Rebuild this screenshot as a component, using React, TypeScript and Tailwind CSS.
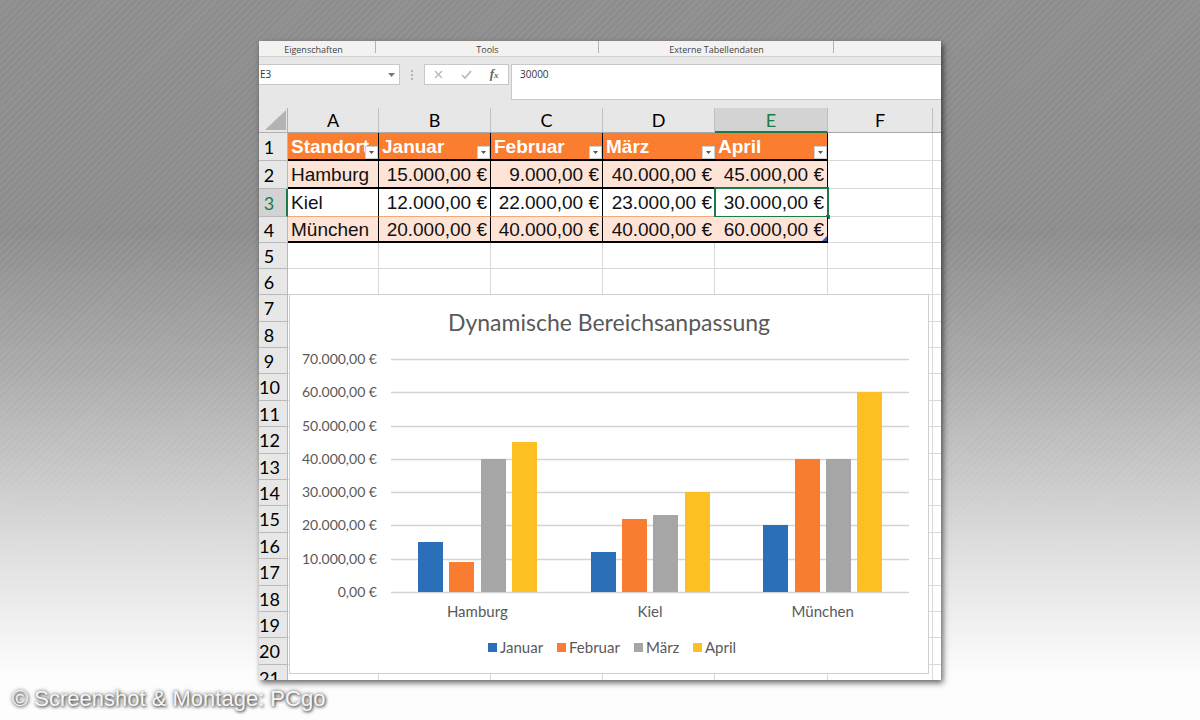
import type { ReactNode } from 'react';

const columns = [
  { name: 'A', header: 'Standort' },
  { name: 'B', header: 'Januar' },
  { name: 'C', header: 'Februar' },
  { name: 'D', header: 'März' },
  { name: 'E', header: 'April' },
  { name: 'F', header: '' },
];

const locations = [
  { name: 'Hamburg', values: [15000, 9000, 40000, 45000] },
  { name: 'Kiel', values: [12000, 22000, 23000, 30000] },
  { name: 'München', values: [20000, 40000, 40000, 60000] },
];

const series = [
  { name: 'Januar', color: '#2a6fb8', legendX: 199 },
  { name: 'Februar', color: '#f97d31', legendX: 268 },
  { name: 'März', color: '#a6a6a6', legendX: 345 },
  { name: 'April', color: '#fdc023', legendX: 404 },
];

const emptyRows = Array.from({ length: 17 }, (_, i) => i + 5);

function formatEuro(value: number) {
  const whole = String(value).replace(/\B(?=(\d{3})+$)/g, '.');
  return `${whole},00 €`;
}

function Ribbon() {
  return (
    <div className="flex h-4 border-b border-[#d2d0ce] bg-[#f4f2f1] text-[9px] leading-[17px] text-[#444444]">
      <div className="relative w-[117px] shrink-0 pr-2 text-center">
        Eigenschaften
        <span className="absolute right-0 top-0 h-3 w-px bg-[#b5b3b1]" />
      </div>
      <div className="relative w-[223px] shrink-0 text-center">
        Tools
        <span className="absolute right-0 top-0 h-3 w-px bg-[#b5b3b1]" />
      </div>
      <div className="relative w-[235px] shrink-0 text-center">
        Externe Tabellendaten
        <span className="absolute right-0 top-0 h-3 w-px bg-[#b5b3b1]" />
      </div>
    </div>
  );
}

function FormulaBar() {
  return (
    <div className="flex items-start pb-2 pt-[7px] text-[10px] text-[#333333]">
      <div className="flex h-[21px] w-[141px] shrink-0 items-center border border-l-0 border-[#c8c8c8] bg-white">
        <input
          aria-label="Namenfeld"
          defaultValue="E3"
          className="min-w-0 flex-1 bg-transparent pl-px outline-none"
        />
        <button aria-label="Namenfeld öffnen" className="flex h-full w-4 items-center justify-center">
          <svg width="7" height="4" viewBox="0 0 7 4">
            <path d="M0 0h7L3.5 4z" fill="#777777" />
          </svg>
        </button>
      </div>
      <div className="flex h-[21px] w-6 shrink-0 items-center justify-center">
        <svg width="2" height="10" viewBox="0 0 2 10" fill="#b4b4b4">
          <path d="M0 0h2v2H0zM0 4h2v2H0zM0 8h2v2H0z" />
        </svg>
      </div>
      <div className="flex h-[21px] w-[85px] shrink-0 items-center border border-[#c8c8c8] bg-white">
        <button aria-label="Abbrechen" className="flex h-full flex-1 items-center justify-center">
          <svg width="9" height="9" viewBox="0 0 9 9" fill="none" stroke="#b8b8b8" strokeWidth="1.4">
            <path d="M1 1l7 7M8 1L1 8" />
          </svg>
        </button>
        <button aria-label="Eingeben" className="flex h-full flex-1 items-center justify-center">
          <svg width="11" height="9" viewBox="0 0 11 9" fill="none" stroke="#b8b8b8" strokeWidth="1.7">
            <path d="M1 5l3 3L10 1" />
          </svg>
        </button>
        <button
          aria-label="Funktion einfügen"
          className="h-full flex-1 font-['Liberation_Serif',serif] text-[13px] font-bold italic leading-4 text-[#666666]"
        >
          f<span className="text-[9px]">x</span>
        </button>
      </div>
      <textarea
        aria-label="Bearbeitungsleiste"
        defaultValue="30000"
        className="ml-0.5 block h-9 min-w-0 flex-1 resize-none border border-r-0 border-[#c8c8c8] bg-white px-2 pt-0.5 leading-[14px] outline-none"
      />
    </div>
  );
}

function RowHeader({ children, active }: { children: ReactNode; active?: boolean }) {
  return (
    <th
      scope="row"
      className={`border-b border-b-[#b9b9b9] p-0 text-center font-['Lato',sans-serif] text-[18px] font-normal leading-5 ${
        active
          ? 'border-r-2 border-r-[#1b7a48] bg-[#d3d3d3] pr-[7px] text-[#1b7a48]'
          : 'border-r border-r-[#b9b9b9] bg-[#e7e7e7] pr-2 text-black'
      }`}
    >
      {children}
    </th>
  );
}

function EmptyCells({ count }: { count: number }) {
  return (
    <>
      {Array.from({ length: count }, (_, i) => (
        <td key={i} className="border-b border-r border-[#d8d8d8] p-0 last:border-r-0" />
      ))}
    </>
  );
}

// D has no divider of its own towards the April column
const verticalLine = ['border-r border-r-black', 'border-r border-r-black', 'border-r border-r-black', '', 'border-r border-r-black'];

const rowStyle = [
  'bg-[#fde4d6] border-b-2 border-b-black pt-px',
  'bg-white border-b border-b-[#f4a77a]',
  'bg-[#fde4d6] border-b-2 border-b-black pt-px',
];

const rowHeight = ['h-7', 'h-7', 'h-[26px]'];

function Sheet() {
  return (
    <table className="w-full table-fixed border-separate border-spacing-0 bg-white">
      <colgroup>
        <col className="w-[29px]" />
        <col className="w-[91px]" />
        <col className="w-[112px]" />
        <col className="w-[112px]" />
        <col className="w-[112px]" />
        <col className="w-[113px]" />
        <col className="w-[105px]" />
        <col />
      </colgroup>
      <thead>
        <tr className="h-[25px]">
          <th className="border-b border-r border-[#b0b0b0] bg-[#e7e7e7] p-0">
            <svg className="ml-1.5" width="21" height="20" viewBox="0 0 21 20">
              <path d="M21 0v20H0z" fill="#b3b3b3" />
            </svg>
          </th>
          {columns.map((col) => (
            <th
              key={col.name}
              scope="col"
              className={`p-0 font-['Lato',sans-serif] text-[18px] font-normal leading-5 ${
                col.name === 'E'
                  ? 'border-b-2 border-r border-b-[#1b7a48] border-r-[#c0c0c0] bg-[#d3d3d3] text-[#1b7a48]'
                  : 'border-b border-r border-b-[#a8a8a8] border-r-[#c0c0c0] bg-[#e7e7e7] text-black'
              }`}
            >
              {col.name}
            </th>
          ))}
          <th className="border-b border-[#a8a8a8] bg-[#e7e7e7] p-0" />
        </tr>
      </thead>
      <tbody className="font-['Liberation_Sans',sans-serif] text-[19px] leading-5 text-[#111111]">
        <tr className="h-7">
          <RowHeader>1</RowHeader>
          {columns.slice(0, 5).map((col, i) => (
            <td
              key={col.name}
              className={`relative border-b-2 border-b-black bg-[#fb7d2f] p-0 pl-[3px] pt-px font-bold text-white ${verticalLine[i]}`}
            >
              {col.header}
              <button
                aria-label={`${col.header} filtern`}
                className="absolute bottom-0 right-0 flex h-[13px] w-[13px] items-center justify-center border border-[#d0d0d0] bg-white"
              >
                <svg width="5" height="3" viewBox="0 0 5 3">
                  <path d="M0 0h5L2.5 3z" fill="#555555" />
                </svg>
              </button>
            </td>
          ))}
          <EmptyCells count={2} />
        </tr>
        {locations.map((location, row) => (
          <tr key={location.name} className={rowHeight[row]}>
            <RowHeader active={row === 1}>{row + 2}</RowHeader>
            <td className={`p-0 pl-[3px] ${rowStyle[row]} ${verticalLine[0]}`}>{location.name}</td>
            {location.values.map((value, i) => (
              <td
                key={i}
                className={`relative whitespace-nowrap p-0 pr-[3px] text-right ${rowStyle[row]} ${verticalLine[i + 1]}`}
              >
                {formatEuro(value)}
                {row === 1 && i === 3 && (
                  <span className="pointer-events-none absolute -bottom-0.5 -left-px -right-0.5 -top-0.5 border-2 border-[#1b7a48]">
                    <span className="absolute -bottom-[3px] -right-[3px] h-1 w-1 bg-[#1b7a48]" />
                  </span>
                )}
                {row === 2 && i === 3 && (
                  <svg className="absolute bottom-0 right-0" width="5" height="5" viewBox="0 0 5 5">
                    <path d="M5 0v5H0z" fill="#3c5ba9" />
                  </svg>
                )}
              </td>
            ))}
            <EmptyCells count={2} />
          </tr>
        ))}
        {emptyRows.map((n) => (
          <tr key={n} className={[0, 2].includes(n % 5) && n > 5 ? 'h-[27px]' : 'h-[26px]'}>
            <RowHeader>{n}</RowHeader>
            <EmptyCells count={7} />
          </tr>
        ))}
      </tbody>
    </table>
  );
}

const plot = { left: 101, right: 619, bottom: 298, height: 233, max: 70000 };
const groupWidth = (plot.right - plot.left) / locations.length;

function Chart() {
  const ticks = [0, 10000, 20000, 30000, 40000, 50000, 60000, 70000];
  const y = (value: number) => Math.round(plot.bottom - (value / plot.max) * plot.height);

  return (
    <svg viewBox="0 0 638 378" className="block w-full font-['Lato',sans-serif]" fill="#595959">
      <text x="319" y="36" fontSize="23" textAnchor="middle">
        Dynamische Bereichsanpassung
      </text>
      {ticks.map((tick) => (
        <g key={tick}>
          <path d={`M${plot.left} ${y(tick) - 0.5}H${plot.right}`} stroke="#d4d4d4" strokeWidth="1.5" />
          <text x="87" y={y(tick) + 4} fontSize="14" textAnchor="end">
            {formatEuro(tick)}
          </text>
        </g>
      ))}
      {locations.map((location, g) => (
        <g key={location.name}>
          {location.values.map((value, i) => (
            <rect
              key={i}
              x={Math.round(plot.left + g * groupWidth + 27 + i * 31.3)}
              y={y(value) - 1}
              width="25"
              height={plot.bottom - y(value)}
              fill={series[i].color}
            />
          ))}
          <text x={plot.left + (g + 0.5) * groupWidth} y="322" fontSize="15" textAnchor="middle">
            {location.name}
          </text>
        </g>
      ))}
      {series.map((s) => (
        <g key={s.name}>
          <rect x={s.legendX - 1} y="348" width="9" height="9" fill={s.color} />
          <text x={s.legendX + 11} y="358" fontSize="15">
            {s.name}
          </text>
        </g>
      ))}
    </svg>
  );
}

export default function App() {
  return (
    <div className="relative flex min-h-screen flex-col bg-[linear-gradient(#929292,#919191_32%,#adadad_51%,#dedede_76%,#fdfdfd_94%)]">
      <div className="absolute inset-0 bg-[repeating-linear-gradient(135deg,rgba(0,0,0,0.04)_0px,rgba(0,0,0,0.04)_2px,transparent_2px,transparent_5px)] mask-b-from-30% mask-b-to-80%" />
      <main className="relative mx-auto mt-[41px] w-full max-w-[682px] bg-[#e7e7e7] font-['Open_Sans',sans-serif] shadow-[2px_3px_6px_rgba(0,0,0,0.6)]">
        <Ribbon />
        <FormulaBar />
        <div className="relative h-[572px] overflow-hidden">
          <Sheet />
          <div className="absolute left-[30px] right-3 top-[186px] border border-[#d0d0d0] bg-white">
            <Chart />
          </div>
        </div>
      </main>
      <footer className="relative px-3 pt-[3px] font-['Liberation_Sans',sans-serif] text-[22px] leading-8 text-[#f6f6f6] [text-shadow:1px_1px_3px_#444,0_0_4px_#666]">
        © Screenshot &amp; Montage: PCgo
      </footer>
    </div>
  );
}
